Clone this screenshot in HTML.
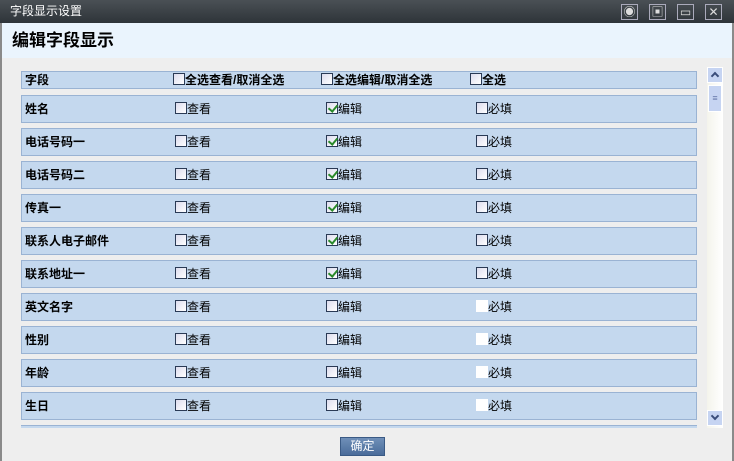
<!DOCTYPE html>
<html><head><meta charset="utf-8"><style>
*{margin:0;padding:0;box-sizing:border-box}
body{width:734px;height:461px;overflow:hidden;background:#eeeeee;font-family:"Liberation Sans","Noto Sans CJK SC",sans-serif;font-size:12px;position:relative}
.tb{position:absolute;left:0;top:0;width:734px;height:23px;background:linear-gradient(#4a5055,#2e3439);color:#fff;font-size:12px;line-height:23px;padding-left:10px}
.ic{position:absolute;top:4px;width:17px;height:16px;border:1px solid #aab;color:#ddd;font-size:12px;line-height:14px;text-align:center}
.hd{position:absolute;left:2px;top:23px;width:730px;height:35px;background:#eaf4fd;font-size:17px;font-weight:bold;line-height:36px;padding-left:10px}
.row{position:absolute;left:21px;width:676px;height:28px;background:#c4d8ee;border:1px solid #9ab3d3;font-weight:bold;line-height:26px;padding-left:3px}
.row span{position:absolute;font-weight:normal;top:0}
.cb{display:inline-block;width:12px;height:12px;border:1px solid #2a3a55;background:linear-gradient(135deg,#dde,#fff);vertical-align:-1px;position:relative}
.cb.w{border-color:#fff;background:#fff}
.cb.c::after{content:"";position:absolute;left:3px;top:0px;width:4px;height:7px;border:solid #2a8a2a;border-width:0 2px 2px 0;transform:rotate(40deg)}
.arr{position:absolute;left:707px;width:16px;height:16px;background:#c6d4f2;border:1px solid #fff}
</style></head><body>
<div style="position:absolute;left:0;top:0;width:2px;height:461px;background:#8a8a8a"></div>
<div style="position:absolute;right:0;top:0;width:2px;height:461px;background:#8a8a8a"></div>
<div class="tb">字段显示设置</div>
<div class="ic" style="left:621px">◉</div>
<div class="ic" style="left:649px">▣</div>
<div class="ic" style="left:677px">▭</div>
<div class="ic" style="left:705px">✕</div>
<div class="hd">编辑字段显示</div>
<div class="row" style="top:71px;height:18px;line-height:16px">字段<span style="left:151px;font-weight:bold"><i class="cb"></i>全选查看/取消全选</span><span style="left:299px;font-weight:bold"><i class="cb"></i>全选编辑/取消全选</span><span style="left:448px;font-weight:bold"><i class="cb"></i>全选</span></div>
<div class="row" style="top:95px">姓名<span style="left:153px"><i class="cb"></i>查看</span><span style="left:304px"><i class="cb c"></i>编辑</span><span style="left:454px"><i class="cb"></i>必填</span></div>
<div class="row" style="top:128px">电话号码一<span style="left:153px"><i class="cb"></i>查看</span><span style="left:304px"><i class="cb c"></i>编辑</span><span style="left:454px"><i class="cb"></i>必填</span></div>
<div class="row" style="top:161px">电话号码二<span style="left:153px"><i class="cb"></i>查看</span><span style="left:304px"><i class="cb c"></i>编辑</span><span style="left:454px"><i class="cb"></i>必填</span></div>
<div class="row" style="top:194px">传真一<span style="left:153px"><i class="cb"></i>查看</span><span style="left:304px"><i class="cb c"></i>编辑</span><span style="left:454px"><i class="cb"></i>必填</span></div>
<div class="row" style="top:227px">联系人电子邮件<span style="left:153px"><i class="cb"></i>查看</span><span style="left:304px"><i class="cb c"></i>编辑</span><span style="left:454px"><i class="cb"></i>必填</span></div>
<div class="row" style="top:260px">联系地址一<span style="left:153px"><i class="cb"></i>查看</span><span style="left:304px"><i class="cb c"></i>编辑</span><span style="left:454px"><i class="cb"></i>必填</span></div>
<div class="row" style="top:293px">英文名字<span style="left:153px"><i class="cb"></i>查看</span><span style="left:304px"><i class="cb"></i>编辑</span><span style="left:454px"><i class="cb w"></i>必填</span></div>
<div class="row" style="top:326px">性别<span style="left:153px"><i class="cb"></i>查看</span><span style="left:304px"><i class="cb"></i>编辑</span><span style="left:454px"><i class="cb w"></i>必填</span></div>
<div class="row" style="top:359px">年龄<span style="left:153px"><i class="cb"></i>查看</span><span style="left:304px"><i class="cb"></i>编辑</span><span style="left:454px"><i class="cb w"></i>必填</span></div>
<div class="row" style="top:392px">生日<span style="left:153px"><i class="cb"></i>查看</span><span style="left:304px"><i class="cb"></i>编辑</span><span style="left:454px"><i class="cb w"></i>必填</span></div>
<div style="position:absolute;left:21px;top:425px;width:676px;height:3px;background:#c4d8ee;border-top:1px solid #9ab3d3"></div>
<div style="position:absolute;left:707px;top:67px;width:16px;height:361px;background:linear-gradient(90deg,#f4f4ec,#fff)"></div>
<div class="arr" style="top:67px"><i style="position:absolute;left:4px;top:5px;width:6px;height:6px;border:solid #3a4d7a;border-width:2px 0 0 2px;transform:rotate(45deg)"></i></div>
<div style="position:absolute;left:708px;top:85px;width:14px;height:27px;background:#c6d4f2;border:1px solid #fff;color:#6677aa;font-size:9px;text-align:center;line-height:25px">≡</div>
<div class="arr" style="top:410px"><i style="position:absolute;left:4px;top:2px;width:6px;height:6px;border:solid #3a4d7a;border-width:0 2px 2px 0;transform:rotate(45deg)"></i></div>
<div style="position:absolute;left:340px;top:437px;width:45px;height:19px;background:linear-gradient(#6f8fb8,#4a6c9a);border:1px solid #3a5a85;color:#fff;text-align:center;line-height:17px">确定</div>
</body></html>
